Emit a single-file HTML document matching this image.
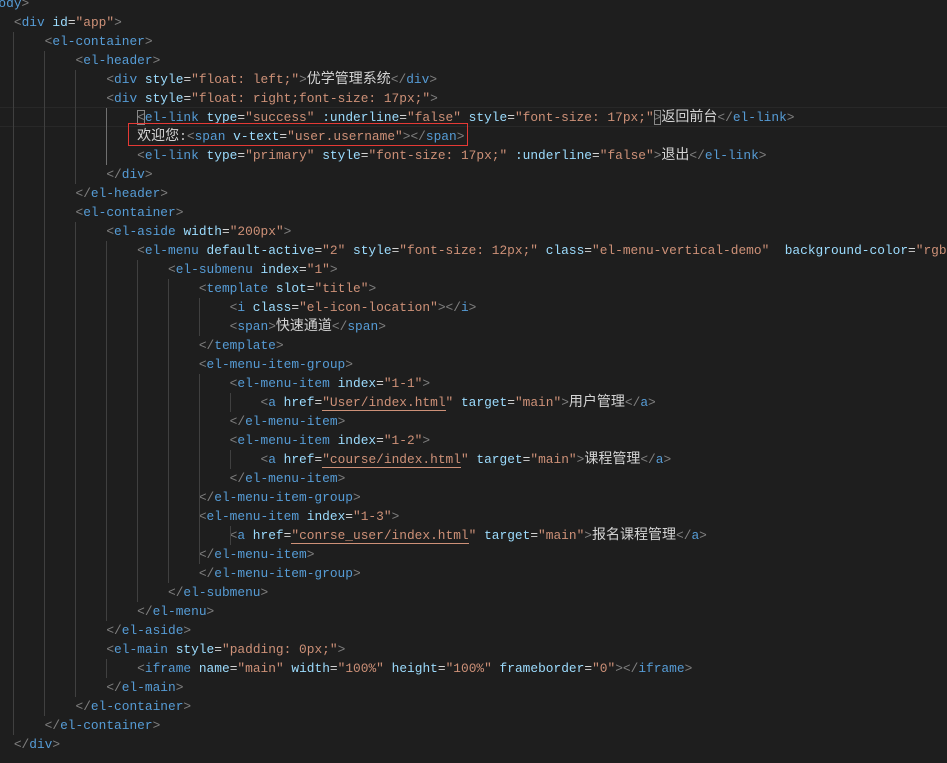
<!DOCTYPE html>
<html><head><meta charset="utf-8">
<style>
html,body{margin:0;padding:0;background:#1e1e1e;width:947px;height:763px;overflow:hidden;position:relative}
.code{position:absolute;left:-17px;top:-6.5px;font-family:"Liberation Mono","Noto Sans CJK SC",monospace;font-size:12.85px;color:#d4d4d4}
.l{height:19px;line-height:19px;white-space:pre;overflow:hidden}
.b{color:#808080}.t{color:#569cd6}.a{color:#9cdcfe}.s{color:#ce9178}
.u{border-bottom:1px solid #ce9178}
.c{font-family:"Noto Sans CJK SC",sans-serif;font-size:14px;line-height:1;vertical-align:baseline;color:#d4d4d4}
.g{position:absolute;width:1px;background:#404040}
</style></head><body>
<div style="position:absolute;left:0;top:107px;width:947px;height:20px;border-top:1px solid #282828;border-bottom:1px solid #282828;box-sizing:border-box"></div>
<div class="code">
<div class="l"><span class="t">&lt;body</span><span class="b">&gt;</span></div>
<div class="l">    <span class="b">&lt;</span><span class="t">div</span> <span class="a">id</span>=<span class="s">"app"</span><span class="b">&gt;</span></div>
<div class="l">        <span class="b">&lt;</span><span class="t">el-container</span><span class="b">&gt;</span></div>
<div class="l">            <span class="b">&lt;</span><span class="t">el-header</span><span class="b">&gt;</span></div>
<div class="l">                <span class="b">&lt;</span><span class="t">div</span> <span class="a">style</span>=<span class="s">"float: left;"</span><span class="b">&gt;</span><span class="c">优学管理系统</span><span class="b">&lt;/</span><span class="t">div</span><span class="b">&gt;</span></div>
<div class="l">                <span class="b">&lt;</span><span class="t">div</span> <span class="a">style</span>=<span class="s">"float: right;font-size: 17px;"</span><span class="b">&gt;</span></div>
<div class="l">                    <span class="b" style="outline:1px solid #888;outline-offset:-1px">&lt;</span><span class="t">el-link</span> <span class="a">type</span>=<span class="s">"success"</span> <span class="a">:underline</span>=<span class="s">"false"</span> <span class="a">style</span>=<span class="s">"font-size: 17px;"</span><span class="b" style="outline:1px solid #888;outline-offset:-1px">&gt;</span><span class="c">返回前台</span><span class="b">&lt;/</span><span class="t">el-link</span><span class="b">&gt;</span></div>
<div class="l">                    <span class="c">欢迎您</span>:<span class="b">&lt;</span><span class="t">span</span> <span class="a">v-text</span>=<span class="s">"user.username"</span><span class="b">&gt;&lt;/</span><span class="t">span</span><span class="b">&gt;</span></div>
<div class="l">                    <span class="b">&lt;</span><span class="t">el-link</span> <span class="a">type</span>=<span class="s">"primary"</span> <span class="a">style</span>=<span class="s">"font-size: 17px;"</span> <span class="a">:underline</span>=<span class="s">"false"</span><span class="b">&gt;</span><span class="c">退出</span><span class="b">&lt;/</span><span class="t">el-link</span><span class="b">&gt;</span></div>
<div class="l">                <span class="b">&lt;/</span><span class="t">div</span><span class="b">&gt;</span></div>
<div class="l">            <span class="b">&lt;/</span><span class="t">el-header</span><span class="b">&gt;</span></div>
<div class="l">            <span class="b">&lt;</span><span class="t">el-container</span><span class="b">&gt;</span></div>
<div class="l">                <span class="b">&lt;</span><span class="t">el-aside</span> <span class="a">width</span>=<span class="s">"200px"</span><span class="b">&gt;</span></div>
<div class="l">                    <span class="b">&lt;</span><span class="t">el-menu</span> <span class="a">default-active</span>=<span class="s">"2"</span> <span class="a">style</span>=<span class="s">"font-size: 12px;"</span> <span class="a">class</span>=<span class="s">"el-menu-vertical-demo"</span>  <span class="a">background-color</span>=<span class="s">"rgb</span></div>
<div class="l">                        <span class="b">&lt;</span><span class="t">el-submenu</span> <span class="a">index</span>=<span class="s">"1"</span><span class="b">&gt;</span></div>
<div class="l">                            <span class="b">&lt;</span><span class="t">template</span> <span class="a">slot</span>=<span class="s">"title"</span><span class="b">&gt;</span></div>
<div class="l">                                <span class="b">&lt;</span><span class="t">i</span> <span class="a">class</span>=<span class="s">"el-icon-location"</span><span class="b">&gt;&lt;/</span><span class="t">i</span><span class="b">&gt;</span></div>
<div class="l">                                <span class="b">&lt;</span><span class="t">span</span><span class="b">&gt;</span><span class="c">快速通道</span><span class="b">&lt;/</span><span class="t">span</span><span class="b">&gt;</span></div>
<div class="l">                            <span class="b">&lt;/</span><span class="t">template</span><span class="b">&gt;</span></div>
<div class="l">                            <span class="b">&lt;</span><span class="t">el-menu-item-group</span><span class="b">&gt;</span></div>
<div class="l">                                <span class="b">&lt;</span><span class="t">el-menu-item</span> <span class="a">index</span>=<span class="s">"1-1"</span><span class="b">&gt;</span></div>
<div class="l">                                    <span class="b">&lt;</span><span class="t">a</span> <span class="a">href</span>=<span class="s"><span class="u">"User/index.html</span>"</span> <span class="a">target</span>=<span class="s">"main"</span><span class="b">&gt;</span><span class="c">用户管理</span><span class="b">&lt;/</span><span class="t">a</span><span class="b">&gt;</span></div>
<div class="l">                                <span class="b">&lt;/</span><span class="t">el-menu-item</span><span class="b">&gt;</span></div>
<div class="l">                                <span class="b">&lt;</span><span class="t">el-menu-item</span> <span class="a">index</span>=<span class="s">"1-2"</span><span class="b">&gt;</span></div>
<div class="l">                                    <span class="b">&lt;</span><span class="t">a</span> <span class="a">href</span>=<span class="s"><span class="u">"course/index.html</span>"</span> <span class="a">target</span>=<span class="s">"main"</span><span class="b">&gt;</span><span class="c">课程管理</span><span class="b">&lt;/</span><span class="t">a</span><span class="b">&gt;</span></div>
<div class="l">                                <span class="b">&lt;/</span><span class="t">el-menu-item</span><span class="b">&gt;</span></div>
<div class="l">                            <span class="b">&lt;/</span><span class="t">el-menu-item-group</span><span class="b">&gt;</span></div>
<div class="l">                            <span class="b">&lt;</span><span class="t">el-menu-item</span> <span class="a">index</span>=<span class="s">"1-3"</span><span class="b">&gt;</span></div>
<div class="l">                                <span class="b">&lt;</span><span class="t">a</span> <span class="a">href</span>=<span class="s"><span class="u">"conrse_user/index.html</span>"</span> <span class="a">target</span>=<span class="s">"main"</span><span class="b">&gt;</span><span class="c">报名课程管理</span><span class="b">&lt;/</span><span class="t">a</span><span class="b">&gt;</span></div>
<div class="l">                            <span class="b">&lt;/</span><span class="t">el-menu-item</span><span class="b">&gt;</span></div>
<div class="l">                            <span class="b">&lt;/</span><span class="t">el-menu-item-group</span><span class="b">&gt;</span></div>
<div class="l">                        <span class="b">&lt;/</span><span class="t">el-submenu</span><span class="b">&gt;</span></div>
<div class="l">                    <span class="b">&lt;/</span><span class="t">el-menu</span><span class="b">&gt;</span></div>
<div class="l">                <span class="b">&lt;/</span><span class="t">el-aside</span><span class="b">&gt;</span></div>
<div class="l">                <span class="b">&lt;</span><span class="t">el-main</span> <span class="a">style</span>=<span class="s">"padding: 0px;"</span><span class="b">&gt;</span></div>
<div class="l">                    <span class="b">&lt;</span><span class="t">iframe</span> <span class="a">name</span>=<span class="s">"main"</span> <span class="a">width</span>=<span class="s">"100%"</span> <span class="a">height</span>=<span class="s">"100%"</span> <span class="a">frameborder</span>=<span class="s">"0"</span><span class="b">&gt;&lt;/</span><span class="t">iframe</span><span class="b">&gt;</span></div>
<div class="l">                <span class="b">&lt;/</span><span class="t">el-main</span><span class="b">&gt;</span></div>
<div class="l">            <span class="b">&lt;/</span><span class="t">el-container</span><span class="b">&gt;</span></div>
<div class="l">        <span class="b">&lt;/</span><span class="t">el-container</span><span class="b">&gt;</span></div>
<div class="l">    <span class="b">&lt;/</span><span class="t">div</span><span class="b">&gt;</span></div>
</div>
<div class="g" style="left:13px;top:31.5px;height:703px"></div>
<div class="g" style="left:44px;top:50.5px;height:665px"></div>
<div class="g" style="left:75px;top:69.5px;height:114px"></div>
<div class="g" style="left:75px;top:221.5px;height:475px"></div>
<div class="g" style="left:106px;top:107.5px;height:57px;background:#707070"></div>
<div class="g" style="left:106px;top:240.5px;height:380px"></div>
<div class="g" style="left:106px;top:658.5px;height:19px"></div>
<div class="g" style="left:137px;top:259.5px;height:342px"></div>
<div class="g" style="left:168px;top:278.5px;height:304px"></div>
<div class="g" style="left:199px;top:297.5px;height:38px"></div>
<div class="g" style="left:199px;top:373.5px;height:190px"></div>
<div class="g" style="left:230px;top:392.5px;height:19px"></div>
<div class="g" style="left:230px;top:449.5px;height:19px"></div>
<div class="g" style="left:230px;top:525.5px;height:19px"></div>
<div style="position:absolute;left:128px;top:123px;width:340px;height:23px;border:1px solid #e53935;box-sizing:border-box"></div>
</body></html>
